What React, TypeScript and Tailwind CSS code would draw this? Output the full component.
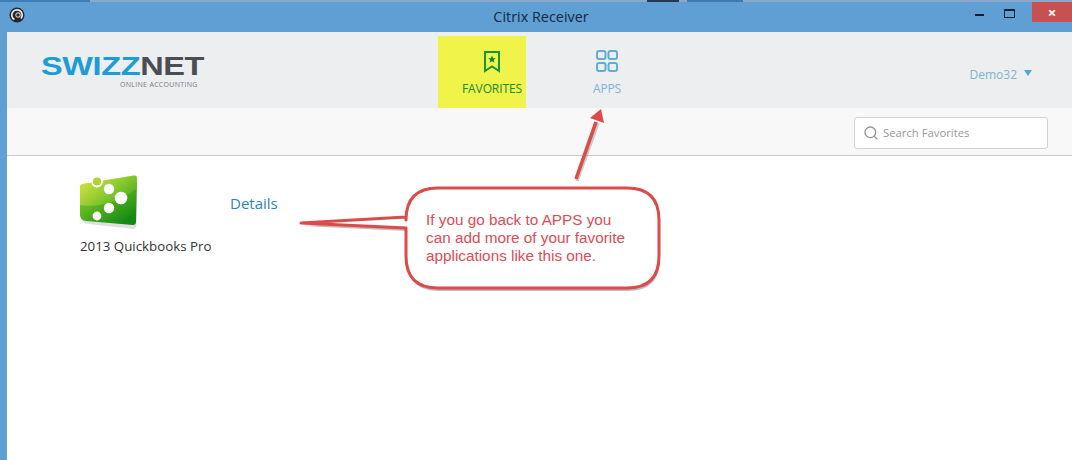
import { Search } from "lucide-react";

function CitrixMark() {
  return (
    <svg width="16" height="16" viewBox="0 0 16 16">
      <circle cx="8" cy="8" r="7.5" fill="#26262a" />
      <circle cx="8" cy="8" r="5.2" fill="none" stroke="#ececec" strokeWidth="1.7" strokeDasharray="25 8" transform="rotate(120 8 8)" />
      <circle cx="9" cy="8" r="2.2" fill="none" stroke="#bdbdbd" strokeWidth="1.2" />
    </svg>
  );
}

function BookmarkStar() {
  return (
    <svg width="18" height="24" viewBox="0 0 18 24">
      <path d="M2 2H16V21L9 16.5L2 21Z" fill="none" stroke="#0f9a3c" strokeWidth="2" />
      <path d="M9 5.5L10.1 8.2L12.8 8.3L10.7 10L11.4 12.6L9 11.2L6.6 12.6L7.3 10L5.2 8.3L7.9 8.2Z" fill="#0f7f38" />
    </svg>
  );
}

function AppsGrid() {
  return (
    <svg width="22" height="22" viewBox="0 0 22 22" fill="none" stroke="#62add0" strokeWidth="2">
      <rect x="1" y="1" width="8.5" height="8" rx="2" />
      <rect x="12.5" y="1" width="8.5" height="8" rx="2" />
      <rect x="1" y="13" width="8.5" height="8" rx="2" />
      <rect x="12.5" y="13" width="8.5" height="8" rx="2" />
    </svg>
  );
}

function QuickbooksIcon() {
  return (
    <svg width="60" height="56" viewBox="0 0 60 56">
      <defs>
        <linearGradient id="qb" x1="0" y1="0" x2="0.7" y2="1">
          <stop offset="0" stopColor="#b7d62c" />
          <stop offset="0.5" stopColor="#62b81f" />
          <stop offset="1" stopColor="#138a16" />
        </linearGradient>
        <linearGradient id="gloss" x1="0" y1="0" x2="1" y2="0.6">
          <stop offset="0" stopColor="#e2e64a" stopOpacity="0.9" />
          <stop offset="1" stopColor="#8fce3a" stopOpacity="0.2" />
        </linearGradient>
      </defs>
      <path d="M4 10L54 1Q57 1 57 4L56 48Q56 51 53 52L7 47Q1 46 1 41L1 13Q1 11 4 10Z" fill="#000" fillOpacity="0.12" transform="translate(0.5 2)" />
      <path d="M3 9L54 0.5Q57 0 57 3L56 47Q56 50 53 50L6 46Q0 45 0 40L0 12Q0 9 3 9Z" fill="url(#qb)" />
      <path d="M3 9L54 0.5Q57 0 57 3L56 14Q30 34 0 30L0 12Q0 9 3 9Z" fill="url(#gloss)" />
      <circle cx="17" cy="6.5" r="5" fill="#b2d334" stroke="#ffffff" strokeWidth="1.8" />
      <g fill="#fff">
        <circle cx="29" cy="14" r="5.2" />
        <circle cx="41" cy="23" r="6.3" />
        <circle cx="29" cy="33" r="5.2" />
        <circle cx="17" cy="41" r="4.4" />
      </g>
    </svg>
  );
}

export default function App() {
  return (
    <div className="relative flex h-[460px] w-[1072px] flex-col overflow-hidden bg-[#5f9fd4] font-['Open_Sans',sans-serif]">
      <div className="flex h-[2px] shrink-0 bg-[#8ba9c7]">
        <div className="h-full w-[90px] bg-[#3f7db8]" />
        <div className="ml-[557px] h-full w-[32px] bg-[#25384f]" />
        <div className="ml-[8px] h-full w-[56px] bg-[#3f7ab5]" />
      </div>
      <div className="relative flex h-[30px] shrink-0 items-center justify-center bg-[#5f9fd4] pl-[10px]">
        <div className="absolute left-[9px] top-[5px]">
          <CitrixMark />
        </div>
        <span className="text-[14.4px] leading-5 text-[#17293a]">Citrix Receiver</span>
        <div className="absolute right-0 top-0 flex items-start">
          <div className="mr-[20px] mt-[12px] h-[2px] w-[9px] bg-[#10202e]" />
          <div className="mr-[17px] mt-[7px] h-[9px] w-[11px] border border-t-2 border-[#10202e]" />
          <div className="flex h-5 w-10 items-center justify-center bg-[#c75050] text-[15px] font-bold leading-none text-white">
            ×
          </div>
        </div>
      </div>

      <div className="ml-[7px] flex flex-1 flex-col bg-white">
        <div className="flex h-[76px] shrink-0 bg-[#eceef0]">
          <div className="ml-[34px] mt-[21px] w-[163px]">
            <div className="h-[24px] origin-left scale-x-[1.25] whitespace-nowrap font-['Liberation_Sans',sans-serif] text-[26px] font-bold leading-[26px] tracking-[-0.3px]">
              <span className="text-[#1f9bd7]">SWIZZ</span>
              <span className="text-[#4a4d52]">NET</span>
            </div>
            <div className="ml-[79px] mt-[2px] whitespace-nowrap text-[7px] leading-[12px] tracking-[0.3px] text-[#777a7e]">
              ONLINE ACCOUNTING
            </div>
          </div>

          <div className="ml-[234px] mt-1 flex h-[72px] w-[88px] flex-col items-center bg-[#f0f34a] pl-[20px] pt-[14px]">
            <BookmarkStar />
            <span className="mt-[7px] text-[12px] leading-4 tracking-[-0.1px] text-[#1c8a2a]">FAVORITES</span>
          </div>
          <div className="ml-[37px] mt-1 flex h-[72px] w-[88px] flex-col items-center pt-[14px]">
            <AppsGrid />
            <span className="mt-[9px] text-[12px] leading-4 tracking-[-0.1px] text-[#7fb4d2]">APPS</span>
          </div>

          <div className="ml-auto mr-[40px] mt-[35px] flex items-start gap-[7px] text-[12px] leading-4 text-[#7fb4d2]">
            <span>Demo32</span>
            <div className="mt-[3px] h-0 w-0 border-x-[4.5px] border-t-[6px] border-x-transparent border-t-[#4fa8cc]" />
          </div>
        </div>

        <div className="flex h-[48px] shrink-0 items-center justify-end border-b border-[#cccccc] bg-[#f8f8f8] pr-[24px] pt-[2px]">
          <div className="flex h-8 w-[194px] items-center gap-[4px] rounded-[3px] border border-[#d2d2d2] bg-white pl-2">
            <Search size={16} strokeWidth={2} className="text-[#949494]" />
            <span className="pt-[1px] text-[11.3px] text-[#999999]">Search Favorites</span>
          </div>
        </div>

        <div className="flex items-start pl-[73px] pt-[19px]">
          <div className="flex w-[150px] flex-col">
            <QuickbooksIcon />
            <span className="mt-[5px] whitespace-nowrap text-[13.3px] leading-[20px] text-[#333333]">2013 Quickbooks Pro</span>
          </div>
          <span className="mt-[18px] text-[15px] leading-5 text-[#2a85b5]">Details</span>
        </div>
      </div>

      <svg className="absolute left-0 top-0" width="1072" height="460" viewBox="0 0 1072 460" fill="none">
        <path d="M576 179L597 121" stroke="#5a5a5a" strokeOpacity="0.3" strokeWidth="3.5" transform="translate(1 2)" />
        <path d="M576 179L596 122" stroke="#dc4a4a" strokeWidth="3.6" />
        <path d="M601 109L604 123L590 118Z" fill="#dc4a4a" />
        <path
          d="M438 188H627Q659 188 659 220V256Q659 288 627 288H438Q406 288 406 256V228L301 223L406 217V220Q406 188 438 188Z"
          fill="#5a5a5a"
          fillOpacity="0.4"
          transform="translate(1 3)"
        />
        <path
          d="M438 188H627Q659 188 659 220V256Q659 288 627 288H438Q406 288 406 256V228L301 223L406 217V220Q406 188 438 188Z"
          fill="#ffffff"
          stroke="#dc4a4a"
          strokeWidth="3"
          strokeLinejoin="round"
        />
      </svg>
      <div className="absolute left-[426px] top-[211px] w-[210px] font-['Liberation_Sans',sans-serif] text-[15.3px] leading-[18px] text-[#dc4c55]">
        If you go back to APPS you can add more of your favorite applications like this one.
      </div>
    </div>
  );
}
